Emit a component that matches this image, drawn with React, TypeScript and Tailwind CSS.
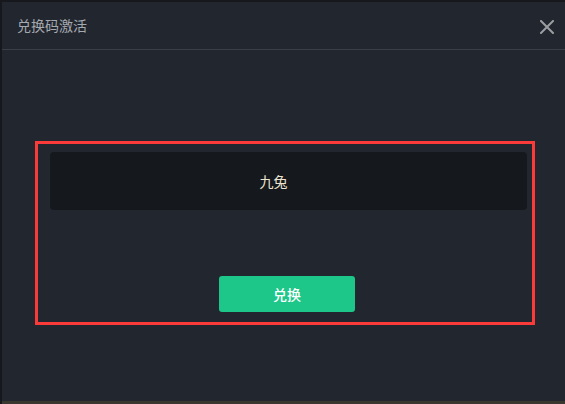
export default function App() {
  return (
    <div className="w-[565px] h-[404px] bg-[#16181d] pt-[2px] pl-[2px] overflow-hidden flex flex-col" style={{ fontFamily: '"Noto Sans CJK SC", "Noto Sans", sans-serif' }}>
      <div className="w-[563px] h-[399px] bg-[#22262f] flex flex-col">
        <div className="h-[48px] border-b border-[#3a3e47] flex items-center justify-between pl-[15px] pr-[11px] shrink-0">
          <span className="text-[14px] text-[#a5a9b0] leading-none -mt-[1px]">兑换码激活</span>
          <svg width="14" height="14" viewBox="0 0 14 14" className="mt-[2px]">
            <path d="M1 1 L13 13 M13 1 L1 13" stroke="#9b9da1" strokeWidth="2" strokeLinecap="square" />
          </svg>
        </div>
        <div className="ml-[33px] mt-[91px] w-[500px] h-[184px] border-[3px] border-[#fb3a3a] pt-[8px] pl-[12px] pr-[5px] flex flex-col">
          <div className="h-[58px] rounded-[4px] bg-[#15181d] flex items-center justify-center">
            <span className="text-[14px] text-[#ece4d0] -ml-[30px]">九兔</span>
          </div>
          <button className="mt-[66px] ml-[169px] w-[136px] h-[36px] rounded-[3px] bg-[#1dc689] text-white text-[14px] font-medium flex items-center justify-center">
            兑换
          </button>
        </div>
      </div>
      <div className="h-[3px] bg-[#3a3630]" />
    </div>
  );
}
